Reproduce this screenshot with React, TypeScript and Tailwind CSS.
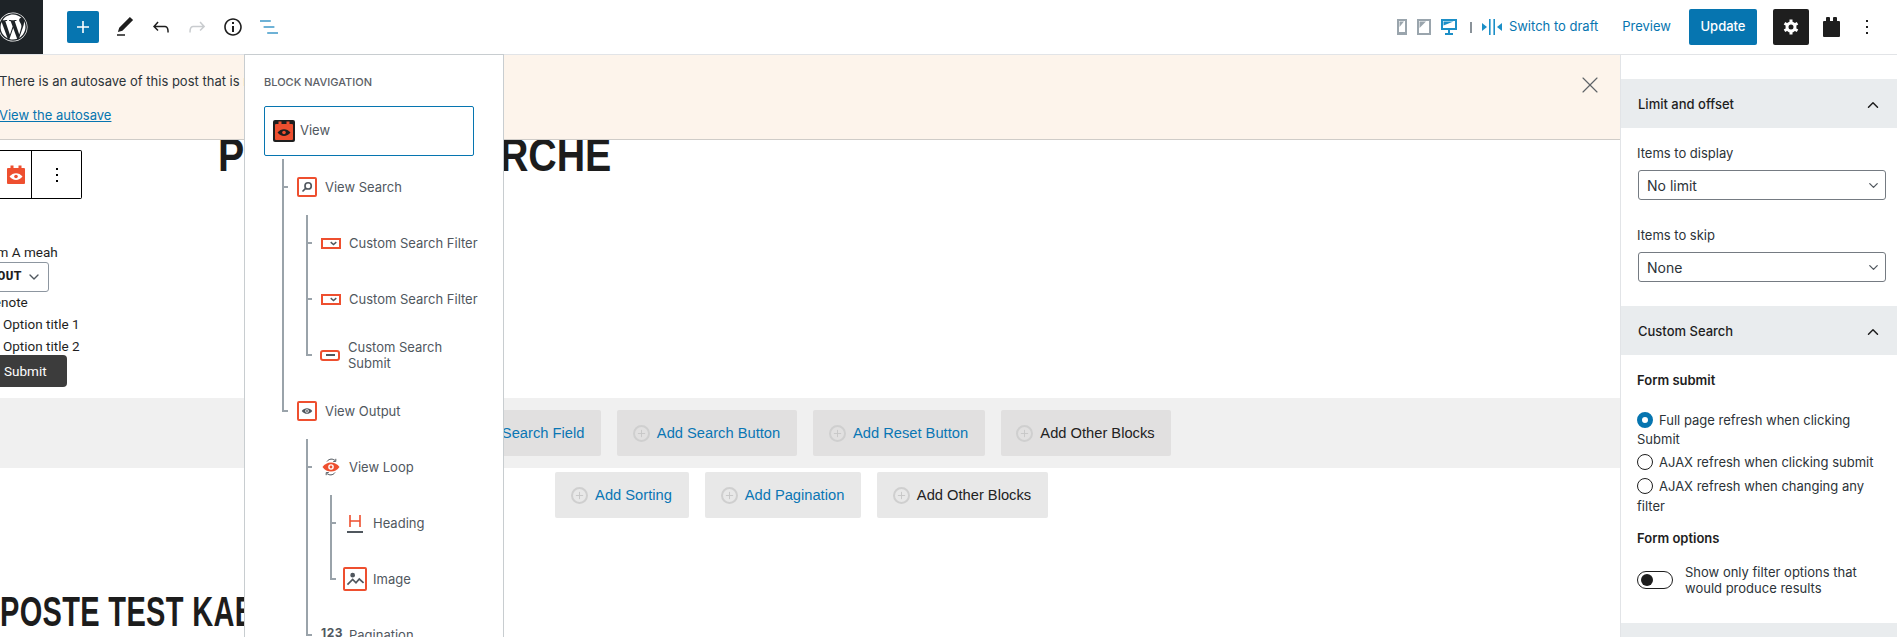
import React from 'react';
import { FaWordpress } from 'react-icons/fa';
import { ChevronDown, ChevronUp, X, Plus } from 'lucide-react';

const ORANGE = '#ee4f2f';

type TreeItem = {
  label: string;
  icon: React.ReactNode;
  children?: TreeItem[];
};

const Svg = ({ d, className = '', box = '0 0 24 24' }: { d: string; className?: string; box?: string }) => (
  <svg viewBox={box} className={className} fill="currentColor">
    <path d={d} />
  </svg>
);

const ViewIcon = ({ dark }: { dark?: boolean }) => (
  <svg viewBox="0 0 22 22" className="w-[22px] h-[22px] shrink-0">
    {dark && <rect width="22" height="22" rx="2" fill="#1e1e1e" />}
    <rect x="2" y="4" width="18" height="16" rx="1" fill={ORANGE} />
    <rect x="5.5" y="1.5" width="3" height="4" fill={ORANGE} />
    <rect x="13.5" y="1.5" width="3" height="4" fill={ORANGE} />
    <path d="M4.5 12.5c3.5-4.5 9.5-4.5 13 0-3.5 4.5-9.5 4.5-13 0z" fill={dark ? '#1e1e1e' : '#fff'} />
    <circle cx="11" cy="12.5" r="1.8" fill={ORANGE} />
  </svg>
);

const BoxIcon = ({ children, className = 'w-5 h-5' }: { children: React.ReactNode; className?: string }) => (
  <span className={`${className} shrink-0 border-2 border-[#ee4f2f] rounded-[2px] flex items-center justify-center text-[#50575e]`}>
    {children}
  </span>
);

const FilterIcon = () => (
  <BoxIcon className="w-5 h-[11px] !rounded-none !justify-end pr-[2px]">
    <svg viewBox="0 0 10 6" className="w-[7px] h-[5px]" fill="none" stroke="currentColor" strokeWidth="2">
      <path d="m1 1 4 3.5L9 1" />
    </svg>
  </BoxIcon>
);

const tree: TreeItem[] = [
  {
    label: 'View Search',
    icon: (
      <BoxIcon>
        <svg viewBox="0 0 16 16" className="w-3 h-3" fill="none" stroke="currentColor" strokeWidth="2.2">
          <circle cx="9.5" cy="6.5" r="4.2" />
          <path d="M6.5 9.5 2 14" />
        </svg>
      </BoxIcon>
    ),
    children: [
      { label: 'Custom Search Filter', icon: <FilterIcon /> },
      { label: 'Custom Search Filter', icon: <FilterIcon /> },
      {
        label: 'Custom Search Submit',
        icon: (
          <BoxIcon className="w-5 h-[11px] !rounded-[3px] -ml-[1px]">
            <span className="block w-[9px] h-[2px] bg-[#50575e]" />
          </BoxIcon>
        ),
      },
    ],
  },
  {
    label: 'View Output',
    icon: (
      <BoxIcon>
        <svg viewBox="0 0 16 10" className="w-[12px] h-[8px]">
          <path d="M1 5c3.5-5 10.5-5 14 0-3.5 5-10.5 5-14 0z" fill="currentColor" />
          <circle cx="8" cy="5" r="2.4" fill="#fff" />
          <circle cx="8" cy="5" r="1.2" fill="currentColor" />
        </svg>
      </BoxIcon>
    ),
    children: [
      {
        label: 'View Loop',
        icon: (
          <svg viewBox="0 0 20 20" className="w-5 h-5 shrink-0">
            <path d="M6 4.5C8 1.5 12 1.5 14 3.5M14 15.5c-2 3-6 3-8 1" fill="none" stroke="#50575e" strokeWidth="1" />
            <path d="M14.8 1.8v2.6h-2.6M5.2 18.2v-2.6h2.6" fill="none" stroke="#50575e" strokeWidth="1" />
            <path d="M1.5 10c4-6 13-6 17 0-4 6-13 6-17 0z" fill={ORANGE} />
            <circle cx="10" cy="10" r="2.8" fill="#fff" />
            <circle cx="10" cy="10" r="1.4" fill={ORANGE} />
          </svg>
        ),
        children: [
          {
            label: 'Heading',
            icon: (
              <span className="w-5 h-5 shrink-0 flex flex-col items-center justify-center">
                <svg viewBox="0 0 14 14" className="w-[14px] h-[14px]" fill="none" stroke={ORANGE} strokeWidth="1.6">
                  <path d="M2 1v12M12 1v12M2 7h10" />
                </svg>
                <span className="block w-4 h-[2px] mt-[3px] bg-[#50575e]" />
              </span>
            ),
          },
          {
            label: 'Image',
            icon: (
              <BoxIcon className="w-6 h-6 -ml-[2px] -mr-[2px]">
                <svg viewBox="0 0 20 20" className="w-[19px] h-[19px]" fill="none" stroke="currentColor" strokeWidth="1.8">
                  <circle cx="7" cy="5.5" r="1.6" fill="currentColor" />
                  <path d="M1.5 15.5 7 10l3.5 3.5L14 9.5l4.5 4" />
                </svg>
              </BoxIcon>
            ),
          },
        ],
      },
      {
        label: 'Pagination',
        icon: <span className="w-5 h-5 shrink-0 -mt-[5px] text-[12px] font-bold tracking-[0.5px] text-[#50575e] leading-5 whitespace-nowrap">123</span>,
      },
    ],
  },
];

const TreeList = ({ items, className = 'ml-[24px]' }: { items: TreeItem[]; className?: string }) => (
  <ul className={className}>
    {items.map((item, i) => {
      const last = i === items.length - 1;
      return (
        <li key={i} className="relative">
          <span className={`absolute left-0 top-0 w-[2px] bg-[#9aa3aa] ${last ? 'h-[29px]' : 'h-full'}`} />
          <span className="absolute left-0 top-[27px] w-[6px] h-[2px] bg-[#9aa3aa]" />
          <div className="h-14 pl-[15px] flex items-center gap-2">
            {item.icon}
            <span className="max-w-[132px] text-[13px] leading-4 text-[#50575e]">{item.label}</span>
          </div>
          {item.children && <TreeList items={item.children} />}
        </li>
      );
    })}
  </ul>
);

const BlockNavigation = () => (
  <div className="absolute left-[244px] top-[54px] bottom-0 w-[260px] z-30 bg-white border-x border-t border-[#c8cdd0] pl-[19px] overflow-hidden">
    <div className="pt-[21px] text-[11px] leading-[12px] font-medium uppercase text-[#5c6066]">Block Navigation</div>
    <div className="mt-[18px] h-[50px] w-[210px] border-[1.5px] border-[#0675b0] rounded-[2px] flex items-center pl-2 gap-[5px]">
      <ViewIcon dark />
      <span className="text-[13px] text-[#50575e]">View</span>
    </div>
    <div className="mt-[3px]">
      <TreeList items={tree} className="ml-[18px]" />
    </div>
  </div>
);

const AddButton = ({ label, dark, className = '' }: { label: string; dark?: boolean; className?: string }) => (
  <div className={`h-[46px] rounded-[2px] flex items-center justify-center gap-[7px] font-['Liberation_Sans',sans-serif] text-[14.7px] ${dark ? 'text-[#222]' : 'text-[#0a76b4]'} ${className}`}>
    <span className="w-[17px] h-[17px] rounded-full border-2 border-[#cfcfcf] flex items-center justify-center">
      <Plus className="w-[11px] h-[11px] text-[#c6c6c6]" strokeWidth={2} />
    </span>
    {label}
  </div>
);

const Editor = () => (
  <div className="relative flex-1 min-w-0 overflow-hidden flex flex-col">
    <div className="relative z-20 h-[85px] shrink-0 bg-[#fdf4eb] border-b border-[#cfccc8] text-[13px] text-[#2c3338] pt-4 pl-[1px] flex justify-between">
      <div className="ml-[-2px]">
        <p className="leading-5 whitespace-nowrap">There is an autosave of this post that is more recent than the version below.</p>
        <a className="block mt-[14px] leading-5 underline text-[#0675b0]">View the autosave</a>
      </div>
      <X className="mr-4 w-7 h-7 text-[#5f6468]" strokeWidth={1} />
    </div>

    <div className="absolute z-10 left-0 top-[95px] w-[82px] h-[49px] bg-white border border-black border-l-0 rounded-r-[2px] flex">
      <div className="w-[32px] border-r border-black flex items-center justify-end pr-[4px] overflow-hidden">
        <span className="shrink-0"><ViewIcon /></span>
      </div>
      <div className="flex-1 flex items-center justify-center">
        <Svg d="M13 19h-2v-2h2v2zm0-6h-2v-2h2v2zm0-6h-2V5h2v2z" className="w-6 h-6 text-black" />
      </div>
    </div>

    <div className="flex-1 flex flex-col ml-[-18px] min-h-0">
      <h1 className="shrink-0 ml-[236px] mt-[-13px] h-[56px] origin-left scale-x-[0.855] whitespace-nowrap font-['Liberation_Sans',sans-serif] font-bold text-[46px] leading-[56px] text-[#1c1c1c]">POSTE RECHERCHE</h1>
      <div className="shrink-0 mt-[59px] text-[13.5px] leading-[22px] text-[#1e1e1e] font-['Roboto',sans-serif] pl-[18px] h-[156px]">
        <div className="ml-[-23px] leading-[20px] whitespace-nowrap">Form A meah</div>
        <div className="ml-[-40px] w-[89px] h-[30px] border border-[#8d96a0] rounded-[3px] flex items-center justify-between pl-[12px] pr-[6px]">
          <span className="font-['Liberation_Mono',monospace] font-bold whitespace-nowrap">LAYOUT</span>
          <ChevronDown className="w-4 h-4 text-[#50575e]" />
        </div>
        <div className="ml-[-15px] mt-[-1px]">Denote</div>
        <div className="ml-[3px]">Option title 1</div>
        <div className="ml-[3px]">Option title 2</div>
        <div className="ml-[-20px] mt-[-2px] w-[87px] h-[32px] bg-[#3c3c3c] rounded-[4px] text-white flex items-center pl-[24px]">Submit</div>
      </div>
      <div className="h-[70px] shrink-0 bg-[#f0f0f0] flex justify-center gap-[16px] pt-[12px]">
        <AddButton label="Add Search Field" className="w-[169px] bg-[#e1e0e0]" />
        <AddButton label="Add Search Button" className="w-[180px] bg-[#e1e0e0]" />
        <AddButton label="Add Reset Button" className="w-[172px] bg-[#e1e0e0]" />
        <AddButton label="Add Other Blocks" dark className="w-[170px] bg-[#e1e0e0]" />
      </div>
      <div className="shrink-0 flex justify-center gap-[16px] pt-[4px]">
        <AddButton label="Add Sorting" className="w-[134px] bg-[#e8e8e8]" />
        <AddButton label="Add Pagination" className="w-[156px] bg-[#e8e8e8]" />
        <AddButton label="Add Other Blocks" dark className="w-[171px] bg-[#e8e8e8]" />
      </div>
      <h2 className="shrink-0 ml-[18px] mt-[69px] origin-left scale-x-[0.69] whitespace-nowrap font-['Liberation_Sans',sans-serif] font-bold text-[42px] leading-[50px] text-[#1c1c1c] tracking-[0.5px]">POSTE TEST KABOOM</h2>
    </div>
  </div>
);

const PanelHeader = ({ title }: { title: string }) => (
  <div className="h-[49px] bg-[#e9ecee] pl-[17px] pr-[15px] pt-[2px] flex items-center justify-between text-[13px] font-medium text-[#1e1e1e]">
    {title}
    <ChevronUp className="w-[18px] h-[18px]" strokeWidth={2} />
  </div>
);

const SelectBox = ({ value }: { value: string }) => (
  <div className="ml-[1px] w-[248px] h-[30px] border border-[#757b82] rounded-[3px] pl-[8px] pr-[4px] flex items-center justify-between text-[14px] text-[#2c3338]">
    {value}
    <ChevronDown className="w-[15px] h-[15px] text-[#50575e]" strokeWidth={2} />
  </div>
);

const Radio = ({ checked }: { checked?: boolean }) => (
  <span className={`inline-block align-[-3px] mr-[6px] w-4 h-4 rounded-full ${checked ? 'border-[5px] border-[#0675b0]' : 'border border-[#1e1e1e]'}`} />
);

const Sidebar = () => (
  <aside className="w-[277px] shrink-0 border-l border-[#e2e4e7] bg-white pt-6 text-[13px] text-[#2c3338] overflow-hidden">
    <PanelHeader title="Limit and offset" />
    <div className="pl-[16px] pt-[16px] h-[178px]">
      <div className="leading-[18px] mb-[8px]">Items to display</div>
      <SelectBox value="No limit" />
      <div className="leading-[18px] mt-[26px] mb-[8px]">Items to skip</div>
      <SelectBox value="None" />
    </div>
    <PanelHeader title="Custom Search" />
    <div className="pl-[16px] pr-[20px] pt-[16px] h-[268px]">
      <div className="font-semibold leading-[18px] text-[#1e1e1e]">Form submit</div>
      <div className="mt-[22px] leading-[19px]"><Radio checked />Full page refresh when clicking Submit</div>
      <div className="mt-[4px] leading-[19px]"><Radio />AJAX refresh when clicking submit</div>
      <div className="mt-[4px] leading-[20px]"><Radio />AJAX refresh when changing any filter</div>
      <div className="mt-[13px] font-semibold leading-[18px] text-[#1e1e1e]">Form options</div>
      <div className="mt-[15px] flex items-start gap-3">
        <span className="mt-[9px] w-[36px] h-[18px] shrink-0 rounded-full border border-[#1e1e1e] flex items-center pl-[3px]">
          <span className="block w-3 h-3 rounded-full bg-[#1e1e1e]" />
        </span>
        <span className="leading-4 pt-[2px]">Show only filter options that would produce results</span>
      </div>
    </div>
    <div className="h-[30px] bg-[#e9ecee]" />
  </aside>
);

const TopBar = () => (
  <header className="h-[55px] shrink-0 bg-white border-b border-[#e2e4e7] flex items-center">
    <div className="w-[43px] h-[54px] bg-[#1e2327] overflow-hidden flex items-center text-white">
      <FaWordpress className="w-[30px] h-[30px] ml-[-2px] shrink-0" />
    </div>
    <button className="ml-6 w-8 h-8 rounded-[2px] bg-[#0675b0] text-white flex items-center justify-center">
      <Svg d="M18 11.2h-5.2V6h-1.6v5.2H6v1.6h5.2V18h1.6v-5.2H18z" className="w-6 h-6" />
    </button>
    <div className="ml-2 flex">
      <button className="w-9 h-9 flex items-center justify-center text-[#1e1e1e]"><Svg d="M20.1 5.1L16.9 2 6.2 12.7l-1.3 4.4 4.5-1.3L20.1 5.1zM4 20.8h8v-1.5H4v1.5z" className="w-6 h-6" /></button>
      <button className="w-9 h-9 flex items-center justify-center text-[#1e1e1e]"><Svg d="M18.3 11.7c-.6-.6-1.4-.9-2.3-.9H6.7l2.9-3.3-1.1-1-4.5 5L8.5 16l1-1-2.7-2.7H16c.5 0 .9.2 1.3.5 1 1 1 3.4 1 4.5v.3h1.5v-.2c0-1.5 0-4.3-1.5-5.7z" className="w-6 h-6" /></button>
      <button className="w-9 h-9 flex items-center justify-center text-[#c9cccf]"><Svg d="M15.6 6.5l-1.1 1 2.9 3.3H8c-.9 0-1.7.3-2.3.9-1.4 1.5-1.4 4.2-1.4 5.6v.2h1.5v-.3c0-1.1 0-3.5 1-4.5.3-.3.7-.5 1.3-.5h9.2L14.5 15l1.1 1.1 4.6-4.6-4.6-5z" className="w-6 h-6" /></button>
      <button className="w-9 h-9 flex items-center justify-center text-[#1e1e1e]"><Svg d="M12 3.2c-4.8 0-8.8 3.9-8.8 8.8 0 4.8 3.9 8.8 8.8 8.8 4.8 0 8.8-3.9 8.8-8.8 0-4.8-4-8.8-8.8-8.8zm0 16c-4 0-7.2-3.3-7.2-7.2C4.8 8 8 4.8 12 4.8s7.2 3.3 7.2 7.2c0 4-3.2 7.2-7.2 7.2zM11 17h2v-6h-2v6zm0-8h2V7h-2v2z" className="w-6 h-6" /></button>
      <button className="w-9 h-9 flex items-center justify-center text-[#3f99c9]"><Svg d="M13.8 5.2H3v1.5h10.8V5.2zm-3.6 12v1.5H21v-1.5H10.2zm7.2-6H6.6v1.5h10.8v-1.5z" className="w-6 h-6" /></button>
    </div>

    <div className="ml-auto flex items-center">
      <svg viewBox="0 0 10 16" className="w-[10px] h-4 text-[#9aa5ad]">
        <path fillRule="evenodd" d="M0 0h10v16H0zM2 2v11h6V2z" fill="currentColor" />
        <path d="M2.5 2.5h4.5L2.5 8z" fill="currentColor" />
      </svg>
      <svg viewBox="0 0 14 16" className="ml-[10px] w-[14px] h-4 text-[#9aa5ad]">
        <path fillRule="evenodd" d="M0 0h14v16H0zM2 2v12h10V2z" fill="currentColor" />
        <path d="M2.5 2.5h6.5L2.5 9z" fill="currentColor" />
      </svg>
      <svg viewBox="0 0 16 16" className="ml-[10px] w-4 h-4 text-[#1c8fc7]">
        <path fillRule="evenodd" d="M0 0h16v11H0zM2 2v7h12V2z" fill="currentColor" />
        <path d="M2.5 2.5h10L2.5 6.5zM7 11h2v3H7zM4 14h8v2H4z" fill="currentColor" />
      </svg>
      <span className="ml-[13px] w-[2px] h-[11px] bg-[#8a9299]" />
      <svg viewBox="0 0 20 16" className="ml-[10px] w-5 h-4 text-[#1c8fc7]">
        <path d="M7 0h1.6v16H7zM11.4 0H13v16h-1.6zM0 4 5 8l-5 4zM20 4l-5 4 5 4z" fill="currentColor" />
      </svg>
      <a className="ml-[7px] text-[13px] text-[#0675b0]">Switch to draft</a>
      <a className="ml-6 text-[13px] text-[#0675b0]">Preview</a>
      <button className="ml-[18px] w-[68px] h-9 rounded-[2px] bg-[#0675b0] text-white text-[13px] font-medium">Update</button>
      <button className="ml-4 w-9 h-9 rounded-[2px] bg-[#1e1e1e] text-white flex items-center justify-center">
        <svg viewBox="0 0 16 16" className="w-4 h-4" fill="none" stroke="currentColor">
          <circle cx="8" cy="8" r="4" strokeWidth="3" />
          <path d="M8 0.5v3M8 12.5v3M1.5 4.2l2.6 1.5M11.9 10.3l2.6 1.5M1.5 11.8l2.6-1.5M11.9 5.7l2.6-1.5" strokeWidth="3" />
        </svg>
      </button>
      <svg viewBox="0 0 17 20" className="ml-[14px] w-[17px] h-5 text-[#1e1e1e]">
        <path d="M3 1a1 1 0 0 1 1-1h2a1 1 0 0 1 1 1v3h3V1a1 1 0 0 1 1-1h2a1 1 0 0 1 1 1v3h2a1 1 0 0 1 1 1v14a1 1 0 0 1-1 1H1a1 1 0 0 1-1-1V5a1 1 0 0 1 1-1h2z" fill="currentColor" />
      </svg>
      <button className="ml-[15px] mr-[18px] w-6 h-6 flex items-center justify-center text-[#1e1e1e]">
        <Svg d="M13 19h-2v-2h2v2zm0-6h-2v-2h2v2zm0-6h-2V5h2v2z" className="w-6 h-6" />
      </button>
    </div>
  </header>
);

export default function App() {
  return (
    <div className="relative h-screen flex flex-col overflow-hidden bg-white font-['Inter',sans-serif]">
      <TopBar />
      <div className="flex-1 min-h-0 flex">
        <Editor />
        <Sidebar />
      </div>
      <BlockNavigation />
    </div>
  );
}
